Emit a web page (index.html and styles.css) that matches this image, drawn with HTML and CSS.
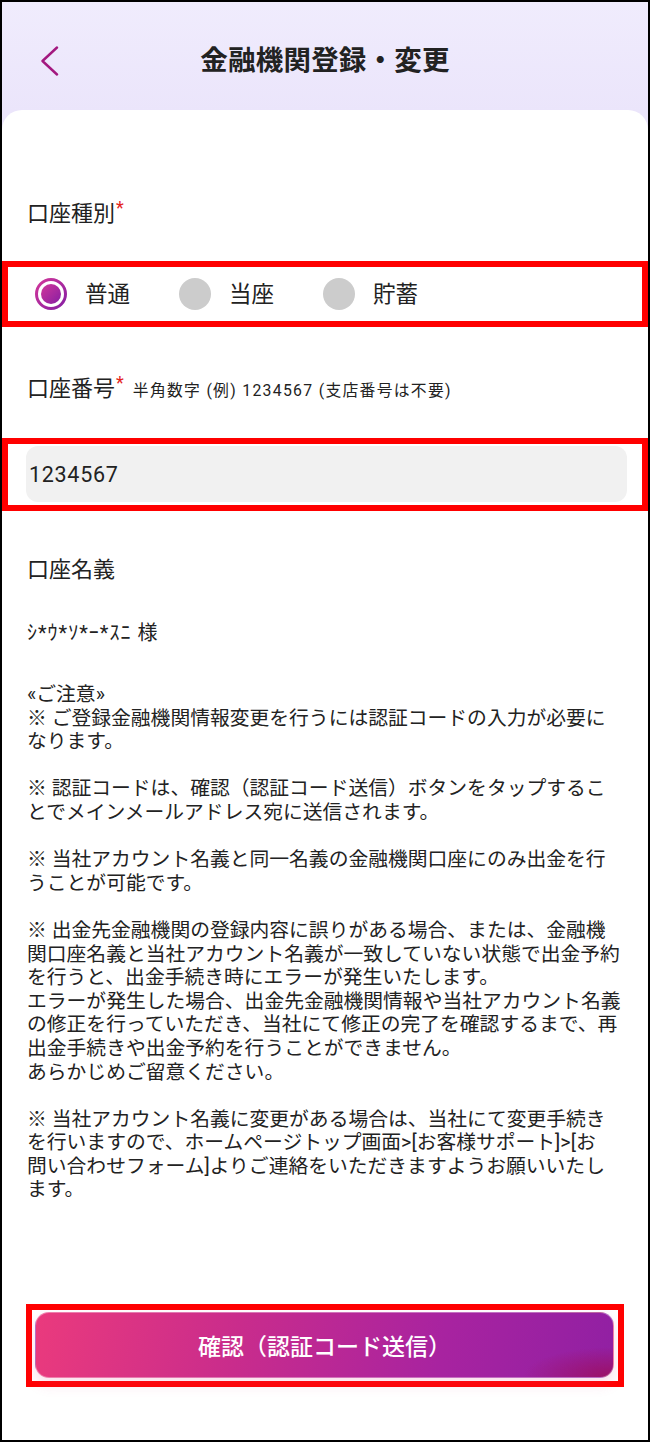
FILE: index.html
```html
<!DOCTYPE html>
<html lang="ja">
<head>
<meta charset="utf-8">
<title>金融機関登録・変更</title>
<link rel="stylesheet" href="styles.css">
</head>
<body>
<div class="screen">
  <header class="topbar">
    <a class="back" aria-label="戻る">
      <svg width="20" height="30" viewBox="0 0 20 30"><path d="M17 1.5 L2.5 15 L17 28.5" fill="none" stroke="#a3187f" stroke-width="2.4" stroke-linecap="round" stroke-linejoin="round"/></svg>
    </a>
    <h1 class="title">金融機関登録・変更</h1>
    <span></span>
  </header>

  <main class="card">
    <div class="pad label first">口座種別<span class="req">*</span></div>

    <div class="mark mark-radio">
      <div class="radios">
        <label class="radio">
          <svg class="dot" width="32" height="32" viewBox="0 0 32 32">
            <defs>
              <linearGradient id="rg" x1="0" y1="0" x2="1" y2="1">
                <stop offset="0" stop-color="#d2379a"/>
                <stop offset="1" stop-color="#861ea3"/>
              </linearGradient>
            </defs>
            <circle cx="16" cy="16" r="14.5" fill="#fff" stroke="url(#rg)" stroke-width="3"/>
            <circle cx="16" cy="16" r="10" fill="url(#rg)"/>
          </svg>
          <span>普通</span>
        </label>
        <label class="radio"><span class="off"></span><span>当座</span></label>
        <label class="radio"><span class="off"></span><span>貯蓄</span></label>
      </div>
    </div>

    <div class="pad label second">口座番号<span class="req">*</span><span class="hint">半角数字 (例) 1234567 (支店番号は不要)</span></div>

    <div class="mark mark-input">
      <div class="input">1234567</div>
    </div>

    <div class="pad label third">口座名義</div>
    <div class="pad name">ｼ*ｳ*ｿ*ｰ*ｽﾆ 様</div>

    <div class="pad notes">
      <p>«ご注意»<br>※ ご登録金融機関情報変更を行うには認証コードの入力が必要になります。</p>
      <p>※ 認証コードは、確認（認証コード送信）ボタンをタップすることでメインメールアドレス宛に送信されます。</p>
      <p>※ 当社アカウント名義と同一名義の金融機関口座にのみ出金を行うことが可能です。</p>
      <p>※ 出金先金融機関の登録内容に誤りがある場合、または、金融機関口座名義と当社アカウント名義が一致していない状態で出金予約を行うと、出金手続き時にエラーが発生いたします。<br>エラーが発生した場合、出金先金融機関情報や当社アカウント名義の修正を行っていただき、当社にて修正の完了を確認するまで、再出金手続きや出金予約を行うことができません。<br>あらかじめご留意ください。</p>
      <p>※ 当社アカウント名義に変更がある場合は、当社にて変更手続きを行いますので、ホームページトップ画面&gt;[お客様サポート]&gt;[お<br>問い合わせフォーム]よりご連絡をいただきますようお願いいたします。</p>
    </div>

    <div class="mark mark-btn">
      <button class="submit" type="button">確認（認証コード送信）</button>
    </div>
  </main>
</div>
</body>
</html>
```

FILE: styles.css
```css
* { box-sizing: border-box; }

html, body {
  margin: 0;
  padding: 0;
  background: #fff;
}

body {
  font-family: Roboto, "Noto Sans CJK JP", sans-serif;
  color: #222;
}

.screen {
  width: 650px;
  height: 1442px;
  border: 2px solid #000;
  background: linear-gradient(#f0ecfd, #ebe5fb 110px, #ebe5fb);
  display: flex;
  flex-direction: column;
  overflow: hidden;
}

.topbar {
  height: 108px;
  flex: none;
  display: grid;
  grid-template-columns: 1fr auto 1fr;
  align-items: start;
  padding: 41px 0 0 38px;
}

.back {
  display: flex;
  width: 20px;
  height: 36px;
  align-items: center;
}

.title {
  margin: 0 0 0 -38px;
  font-size: 27.5px;
  line-height: 36px;
  font-weight: 700;
  color: #222;
  letter-spacing: 0.2px;
}

.card {
  flex: 1;
  background: #fff;
  border-radius: 20px 20px 0 0;
  padding-top: 89px;
}

.pad {
  padding: 0 25px;
}

.label {
  font-size: 22px;
  line-height: 30px;
  color: #222;
}

.second { margin-top: 47px; }
.third { margin-top: 44px; }

.req {
  color: #e3241c;
  font-size: 18px;
  vertical-align: 7px;
  line-height: 0;
  margin-left: 1px;
}

.hint {
  font-size: 15.8px;
  letter-spacing: 1.3px;
  margin-left: 9px;
  color: #222;
}

.mark {
  border: 6px solid #ff0000;
  margin-top: 32px;
}

.mark-radio {
  height: 66px;
}

.radios {
  height: 54px;
  display: flex;
  align-items: center;
  gap: 49px;
  padding-left: 27px;
}

.radio {
  display: flex;
  align-items: center;
  gap: 18px;
  font-size: 22.5px;
  line-height: 30px;
}

.dot { display: block; }

.off {
  width: 32px;
  height: 32px;
  border-radius: 50%;
  background: #cccccc;
}

.mark-input {
  padding: 2px 15px 3px 18px;
}

.input {
  height: 56px;
  background: #f1f1f1;
  border-radius: 12px;
  display: flex;
  align-items: center;
  padding-left: 3px;
  font-size: 21.5px;
  letter-spacing: 0.7px;
  color: #222;
}

.name {
  margin-top: 36px;
  font-size: 20px;
  letter-spacing: 1px;
  line-height: 24px;
}

.notes {
  margin-top: 38px;
  font-size: 19.8px;
  line-height: 23.6px;
}

.notes p {
  margin: 0 0 23.6px;
}

.notes p:last-child { margin-bottom: 0; }

.mark-btn {
  margin: 102px 24px 0;
  padding: 2px 4px 3px 3px;
}

.submit {
  display: block;
  width: 100%;
  height: 66px;
  border: 1px solid rgba(255, 255, 255, 0.35);
  border-radius: 14px;
  background:
    radial-gradient(ellipse 90px 30px at 100% 100%, rgba(160, 10, 80, 0.75), rgba(160, 10, 80, 0) 100%),
    linear-gradient(100deg, #ea3a7d 0%, #c92c8c 35%, #a823a0 70%, #9120a3 100%);
  box-shadow: 0 6px 14px rgba(230, 70, 140, 0.18);
  color: #fff;
  font-family: Roboto, "Noto Sans CJK JP", sans-serif;
  font-size: 23px;
  font-weight: 500;
  letter-spacing: 0;
  cursor: pointer;
}
```
